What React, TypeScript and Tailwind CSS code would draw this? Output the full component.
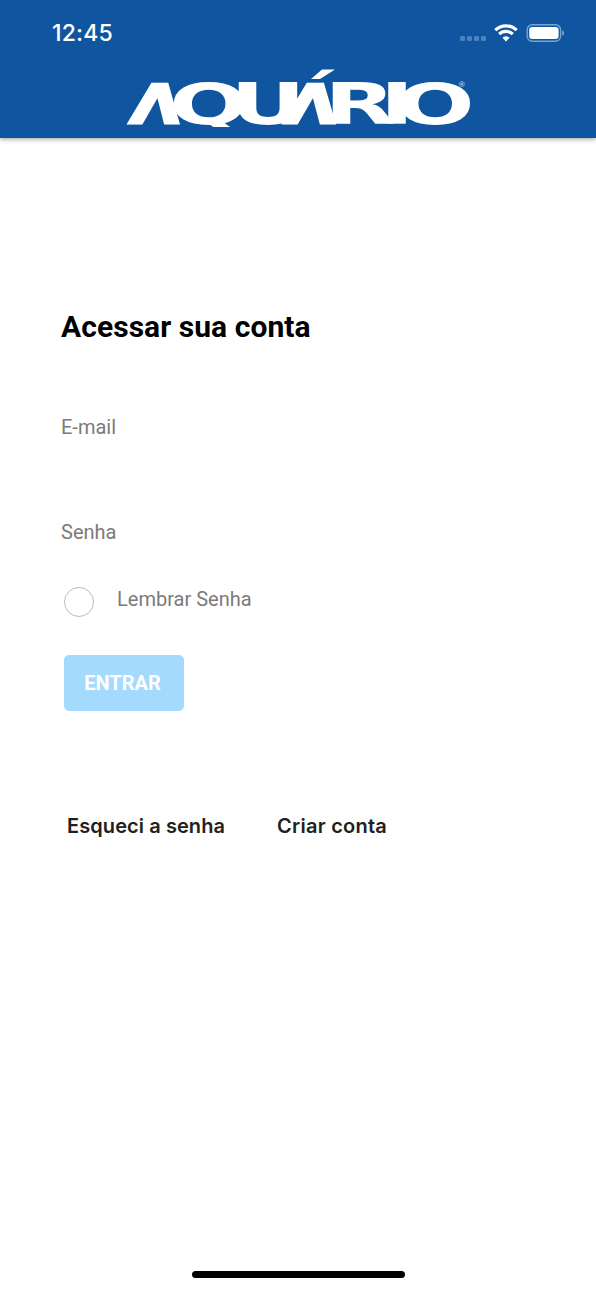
/**
 * Login Page
 * Sign in with e-mail and password
 */

import { useState } from 'react';

function StatusBar() {
  return (
    <div className="flex h-[66px] items-center justify-between pl-[52px] pr-[31px] text-white">
      <span className="font-['Inter',sans-serif] text-[23px] font-medium leading-none tracking-[0.2px]">12:45</span>
      <div className="flex items-center">
        <div className="mt-[11px] flex gap-[2px]">
          <span className="size-[5px] rounded-[1.5px] bg-[#4c83bc]" />
          <span className="size-[5px] rounded-[1.5px] bg-[#4c83bc]" />
          <span className="size-[5px] rounded-[1.5px] bg-[#4c83bc]" />
          <span className="size-[5px] rounded-[1.5px] bg-[#4c83bc]" />
        </div>
        <svg className="ml-2 h-[18px] w-6" viewBox="0 0 24 18" fill="none" stroke="currentColor">
          <path d="M1.3 6.2a15.2 15.2 0 0 1 21.4 0M5.2 10.2a9.7 9.7 0 0 1 13.6 0" strokeWidth="3.2" />
          <path d="M12 17.4 8.4 13.8a5 5 0 0 1 7.2 0z" fill="currentColor" stroke="none" />
        </svg>
        <svg className="ml-2 h-[18px] w-[39px]" viewBox="0 0 39 18" fill="none">
          <rect x="1.2" y="0.8" width="33.4" height="16.4" rx="5" stroke="#78a4d2" strokeWidth="1.4" />
          <rect x="3.2" y="3" width="29.4" height="12" rx="3" fill="white" />
          <path d="M36.2 6.2c2.6 1 2.6 4.6 0 5.6z" fill="#78a4d2" />
        </svg>
      </div>
    </div>
  );
}

function Logo() {
  return (
    <svg
      className="h-[72px] w-full font-['DejaVu_Sans',sans-serif] text-[57px] font-bold"
      viewBox="0 66 596 72"
      fill="white"
      role="img"
      aria-label="Aquário"
    >
      <defs>
        <clipPath id="logo-tail">
          <rect x="0" y="66" width="596" height="61" />
        </clipPath>
      </defs>
      <text transform="translate(129 122.5) skewX(-9)" fontSize="53" textLength="49" lengthAdjust="spacingAndGlyphs" stroke="white" strokeWidth="3">Λ</text>
      <g clipPath="url(#logo-tail)">
        <text transform="scale(1.63 1)" x="103.8 141.2" y="124.6 124.2">QU</text>
      </g>
      <text transform="translate(284 122.5) skewX(-9)" fontSize="53" textLength="50" lengthAdjust="spacingAndGlyphs" stroke="white" strokeWidth="3">Λ</text>
      <text transform="scale(1.63 1)" x="199 233 242.8" y="124.2 124.2 124.6">RIO</text>
      {/* Accent */}
      <path d="M322 69.5h13l-15 9.5h-9z" />
      <text x="458" y="87" fontSize="7.5" fontWeight="400" opacity="0.8">®</text>
    </svg>
  );
}

export default function App() {
  const [remember, setRemember] = useState(false);

  return (
    <div className="flex h-[1290px] w-[596px] flex-col bg-white font-['Roboto',sans-serif]">
      {/* Header */}
      <header className="h-[138px] bg-[#0f559f] shadow-[0_1px_5px_rgba(0,0,0,0.4)]">
        <StatusBar />
        <Logo />
      </header>

      {/* Login Form */}
      <main className="flex flex-1 flex-col items-start pl-[61px] pt-[169px]">
        <h1 className="text-[30px] font-bold leading-10 tracking-[0.06px] text-black">Acessar sua conta</h1>
        <label className="mt-[65px] text-[20px] leading-[30px] text-[#7b7b7b]">E-mail</label>
        <label className="mt-[75px] text-[20px] leading-[30px] text-[#7b7b7b]">Senha</label>

        {/* Remember Password */}
        <button
          type="button"
          role="checkbox"
          aria-checked={remember}
          onClick={() => setRemember(!remember)}
          className="ml-[3px] mt-[37px] flex h-[36px] items-start text-[#7b7b7b]"
        >
          <span className="mt-[3px] flex size-[30px] items-center justify-center rounded-full border-[1.5px] border-[#bdbdbd]">
            {remember && <span className="size-4 rounded-full bg-[#0f559f]" />}
          </span>
          <span className="ml-[23px] text-[20px] leading-[30px]">Lembrar Senha</span>
        </button>

        <button
          type="button"
          className="ml-[3px] mt-[35px] h-[56px] w-[120px] rounded-[5px] bg-[#a3dafd] pr-[3px] text-[20px] font-bold text-white"
        >
          ENTRAR
        </button>

        {/* Links */}
        <div className="ml-[6px] mt-[100px] flex gap-[52px] font-['Inter',sans-serif] text-[20px] font-semibold leading-[30px] text-[#212121]">
          <a className="tracking-[0.08px]">Esqueci a senha</a>
          <a className="tracking-[0.25px]">Criar conta</a>
        </div>
      </main>

      {/* Home Indicator */}
      <div className="mb-[12px] h-[7px] w-[213px] self-center rounded-full bg-black" />
    </div>
  );
}
